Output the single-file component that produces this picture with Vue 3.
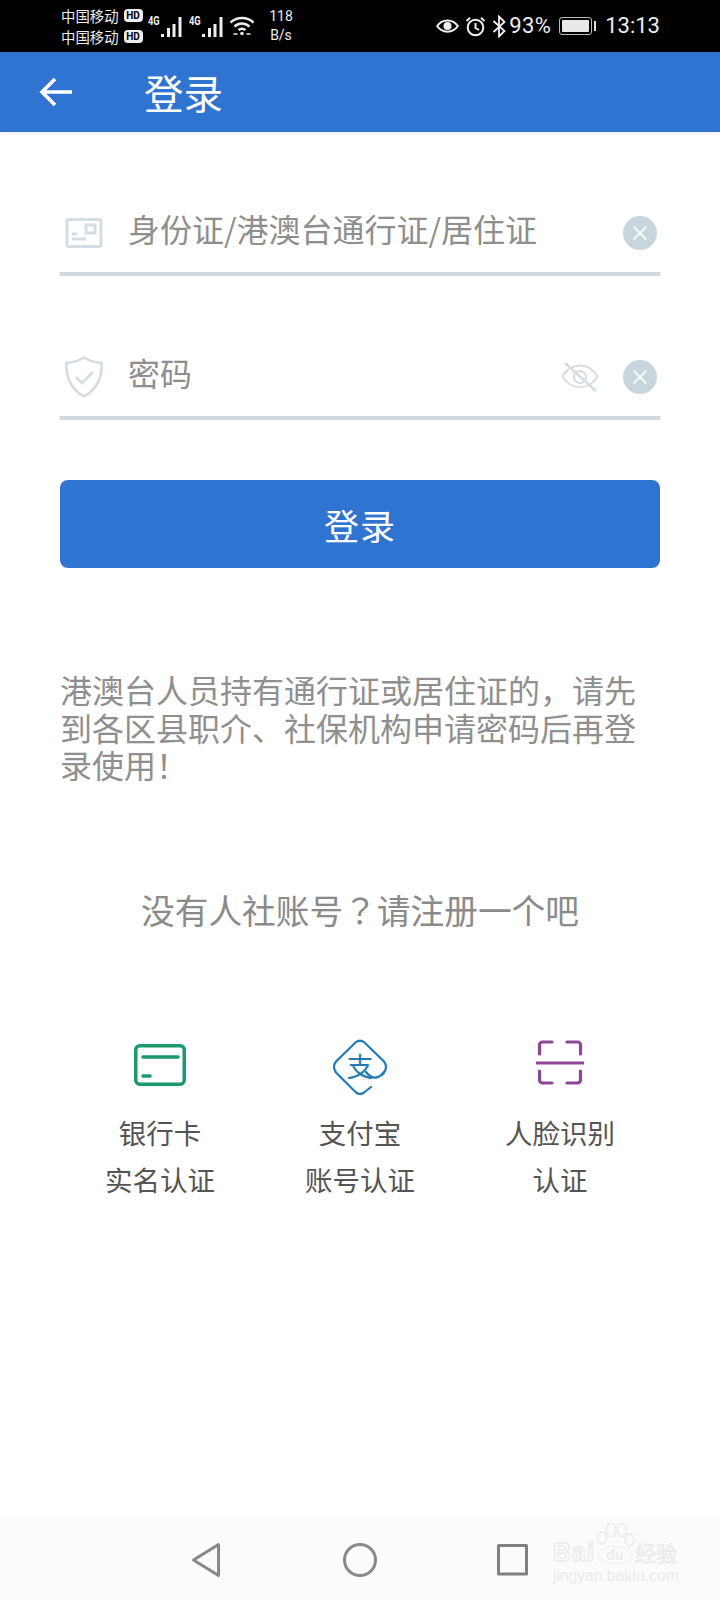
<script setup>
const methods = [
  { id: 'bank', lines: ['银行卡', '实名认证'] },
  { id: 'alipay', lines: ['支付宝', '账号认证'] },
  { id: 'face', lines: ['人脸识别', '认证'] },
]
</script>

<template>
  <div class="page">
    <!-- system status bar -->
    <div class="status-bar">
      <div class="carriers">
        <div class="carrier" v-for="n in 2" :key="n">
          <span>中国移动</span>
          <i class="hd">HD</i>
        </div>
      </div>
      <div class="signal" v-for="n in 2" :key="'s' + n">
        <small>4G</small>
        <svg width="23" height="22" viewBox="0 0 23 22">
          <path d="M2.500 20v-3M8.500 20v-9M14 20V7M20 20V0" stroke="#eee" stroke-width="3" fill="none" />
        </svg>
      </div>
      <svg class="wifi" width="26" height="22" viewBox="0 0 26 22" fill="none" stroke="#eee" stroke-width="2.400">
        <path d="M1.500 7.500C8 1.500 18 1.500 24.500 7.500" />
        <path d="M5.500 11.500C10 7.500 16 7.500 20.500 11.500" />
        <path d="M9.500 15C11.500 13.500 14.500 13.500 16.500 15" />
        <circle cx="13" cy="18.500" r="1.800" fill="#eee" stroke="none" />
        <path d="M4.500 19h4M17.500 19h4" stroke-width="1.600" />
      </svg>
      <div class="speed">
        <span>118</span>
        <span>B/s</span>
      </div>
      <div class="status-right">
        <svg width="23" height="16" viewBox="0 0 23 16" fill="none" stroke="#eee" stroke-width="2">
          <path d="M1.200 8C6 .5 17 .5 21.800 8 17 15.500 6 15.500 1.200 8z" />
          <circle cx="11.500" cy="8" r="4" fill="#eee" stroke="none" />
        </svg>
        <svg class="alarm" width="21" height="21" viewBox="0 0 21 21" fill="none" stroke="#eee" stroke-width="2">
          <circle cx="10.500" cy="11.500" r="7.800" />
          <path d="M10.500 7v5l3.500 2M1.500 5L5 1.800M19.500 5L16 1.800" />
        </svg>
        <svg class="bt" width="15" height="23" viewBox="0 0 15 23" fill="none" stroke="#eee" stroke-width="1.800">
          <path d="M1.500 6l11 10-5.500 5.500V1.500L12.500 7l-11 10" />
        </svg>
        <span class="battery-text">93%</span>
        <div class="battery"><div class="battery-level"></div></div>
        <span class="clock">13:13</span>
      </div>
    </div>

    <header class="app-bar">
      <svg class="back" width="34" height="30" viewBox="0 0 34 30" fill="none" stroke="#fff" stroke-width="3.600">
        <path d="M33 15H3M16 2L3 15l13 13" />
      </svg>
      <h1>登录</h1>
    </header>

    <main class="content">
      <div class="field">
        <svg class="field-icon" width="38" height="30" viewBox="0 0 38 30" fill="none" stroke="#d3dde3" stroke-width="3">
          <rect x="2" y="1.500" width="34" height="27" rx="1.500" />
          <rect x="21" y="7" width="9" height="8" />
          <path d="M7 16h5M7 21h14" />
        </svg>
        <span class="placeholder">身份证/港澳台通行证/居住证</span>
        <span class="clear"></span>
      </div>

      <div class="field">
        <svg class="field-icon" width="38" height="42" viewBox="0 0 38 42" fill="none" stroke="#d3dde3" stroke-width="2.600">
          <path d="M19 1.500C13 5 8 6.500 1.500 7c-1 13 4 26 17.500 33.500C32.500 33 37.500 20 36.500 7 30 6.500 25 5 19 1.500z" />
          <path d="M11 21l6 6 11-11" />
        </svg>
        <span class="placeholder">密码</span>
        <svg class="toggle" width="38" height="30" viewBox="0 0 38 30" fill="none" stroke="#d5dde2" stroke-width="2">
          <path d="M1.500 17C10 1 28 1 36.500 17 28 33 10 33 1.500 17z" transform="translate(0 -1) scale(1 .9)" />
          <circle cx="19" cy="15" r="6" />
          <path d="M4 1l31 28" stroke-width="2.400" />
        </svg>
        <span class="clear"></span>
      </div>

      <button class="login-btn" type="button">登录</button>

      <p class="notice">港澳台人员持有通行证或居住证的，请先到各区县职介、社保机构申请密码后再登录使用！</p>

      <p class="register">没有人社账号<span class="mark-q">？</span>请注册一个吧</p>

      <div class="methods">
        <div class="method" v-for="item in methods" :key="item.id">
          <div class="method-icon">
            <svg v-if="item.id === 'bank'" class="bank-icon" width="52" height="42" viewBox="0 0 52 42" fill="none" stroke="#1b9a6c" stroke-width="3.500" stroke-linecap="round">
              <rect x="1.750" y="1.750" width="48.500" height="38.500" rx="4" />
              <path d="M9 13h35M9 32h7" />
            </svg>
            <svg v-else-if="item.id === 'alipay'" width="56" height="56" viewBox="0 0 56 56" fill="none" stroke="#1f7db4" stroke-width="2.200" stroke-linecap="round">
              <path d="M39 48L32 53.500Q28 56.500 24 53.500L4 33.500Q0 28 4 22.500L23.500 3.500Q28 0 32.500 3.500L52 22.500Q56 28 52 33.500L50 36" />
              <text x="28" y="37.500" text-anchor="middle" class="pay-mark">支</text>
              <path d="M34 33C39 40 46 41 52 33" />
            </svg>
            <svg v-else class="face-icon" width="48" height="46" viewBox="0 0 48 46" fill="none" stroke="#8c4694" stroke-width="3.200" stroke-linecap="round">
              <path d="M3.500 14V5a3 3 0 0 1 3-3H16M31 2h10.500a3 3 0 0 1 3 3v9M3.500 31v9a3 3 0 0 0 3 3H16M31 43h10.500a3 3 0 0 0 3-3v-9M1 23h46" />
            </svg>
          </div>
          <div class="method-line" v-for="line in item.lines" :key="line">{{ line }}</div>
        </div>
      </div>
    </main>

    <!-- system navigation keys -->
    <nav class="nav-bar">
      <svg width="30" height="36" viewBox="0 0 30 36" fill="none" stroke="#888" stroke-width="3" stroke-linejoin="round">
        <path d="M27.500 2.500L2.500 18l25 15.500z" />
      </svg>
      <svg width="34" height="34" viewBox="0 0 34 34" fill="none" stroke="#888" stroke-width="3">
        <circle cx="17" cy="17" r="15.500" />
      </svg>
      <svg width="32" height="32" viewBox="0 0 32 32" fill="none" stroke="#808080" stroke-width="3" stroke-linejoin="round">
        <rect x="1.500" y="1.500" width="28" height="28.500" />
      </svg>
      <div class="mark">
        <svg class="mark-paw" width="38" height="26" viewBox="0 0 38 26" fill="none" stroke="#ebebeb" stroke-width="1.400">
          <ellipse cx="5" cy="15" rx="4.500" ry="6" />
          <ellipse cx="14" cy="7" rx="5" ry="6.500" />
          <ellipse cx="25" cy="7" rx="4.500" ry="6.500" />
          <ellipse cx="32.500" cy="17" rx="4.500" ry="6" />
        </svg>
        <div class="mark-top">
          <span class="mark-bai">Bai</span>
          <span class="mark-du">du</span>
          <span class="mark-cn">经验</span>
        </div>
        <div class="mark-url">jingyan.baidu.com</div>
      </div>
    </nav>
  </div>
</template>

<style scoped>
.page {
  width: 720px;
  height: 1600px;
  display: flex;
  flex-direction: column;
  background: #fff;
  font-family: "Noto Sans CJK SC", "Noto Sans", sans-serif;
  overflow: hidden;
}

.status-bar {
  height: 52px;
  flex: none;
  display: flex;
  align-items: center;
  padding-left: 61px;
  background: #000;
  color: #eee;
}

.carriers {
  width: 87px;
}

.carrier {
  display: flex;
  align-items: center;
  height: 21px;
  font-size: 14.400px;
  line-height: 21px;
  gap: 5px;
  white-space: nowrap;
}

.hd {
  flex: none;
  width: 19px;
  height: 13px;
  border-radius: 4px;
  background: #eee;
  color: #000;
  font: normal 700 10px/13px "Roboto", sans-serif;
  text-align: center;
}

.signal {
  width: 41px;
  display: flex;
  align-items: flex-end;
  margin-top: 2px;
}

.signal small {
  font: 700 13px/12px "Roboto", sans-serif;
  width: 12px;
  margin-bottom: 12px;
  transform: scaleX(0.72);
  transform-origin: left;
}

.wifi {
  margin-left: -1px;
}

.speed {
  width: 34px;
  margin-left: 9px;
  display: flex;
  flex-direction: column;
  align-items: center;
  font: 14px/19px "Roboto", sans-serif;
}

.status-right {
  margin-left: auto;
  margin-right: 60px;
  display: flex;
  align-items: center;
  height: 52px;
}

.alarm {
  margin-left: 6px;
}

.bt {
  margin-left: 6px;
}

.battery-text {
  margin-left: 2px;
  font: 22px/26px "Roboto", sans-serif;
  letter-spacing: 0.400px;
}

.battery {
  position: relative;
  box-sizing: border-box;
  width: 33px;
  height: 18px;
  margin-left: 8px;
  border: 1px solid #bbb;
  border-radius: 3px;
  padding: 2px;
}

.battery::after {
  content: "";
  position: absolute;
  top: 3px;
  right: -5px;
  width: 2px;
  height: 10px;
  background: #ddd;
}

.battery-level {
  height: 100%;
  background: #e8e8e8;
  border-radius: 1px;
}

.clock {
  margin-left: 13px;
  font: 22px/26px "Roboto", sans-serif;
}

.app-bar {
  height: 80px;
  flex: none;
  display: flex;
  align-items: center;
  padding-left: 39px;
  background: #3074d2;
  box-shadow: 0 2px 3px rgba(48, 80, 160, 0.08);
}

.app-bar h1 {
  margin: 0 0 0 71px;
  font-size: 39.500px;
  font-weight: 400;
  color: #fff;
  line-height: 80px;
}

.content {
  flex: 1;
  padding: 0 60px;
}

.field {
  height: 82px;
  margin-top: 62px;
  display: flex;
  align-items: center;
  border-bottom: 4px solid #d1dae0;
  box-sizing: border-box;
}

.field-icon {
  width: 38px;
  margin-left: 5px;
  flex: none;
}

.placeholder {
  flex: 1;
  margin-left: 25px;
  margin-bottom: 10px;
  font-size: 32px;
  line-height: 44px;
  color: #8e8e8e;
}

.toggle {
  margin-right: 24px;
}

.clear {
  position: relative;
  width: 34px;
  height: 34px;
  margin-right: 3px;
  border-radius: 50%;
  background: #c9d5dc;
}

.clear::before,
.clear::after {
  content: "";
  position: absolute;
  left: 8px;
  top: 16px;
  width: 18px;
  height: 2px;
  background: #fff;
  transform: rotate(45deg);
}

.clear::after {
  transform: rotate(-45deg);
}

.login-btn {
  display: block;
  width: 100%;
  height: 88px;
  margin-top: 60px;
  padding: 0;
  border: none;
  border-radius: 8px;
  background: #3074d2;
  color: #fff;
  font-family: inherit;
  font-size: 35px;
  letter-spacing: 1px;
}

.notice {
  margin: 103px 0 0;
  font-size: 32px;
  line-height: 37.700px;
  color: #8f8f8f;
}

.register {
  margin: 105.500px 0 0;
  font-size: 33.700px;
  line-height: 40px;
  text-align: center;
  color: #8a8a8a;
}

.mark-q {
  font-family: "Noto Sans CJK TC", sans-serif;
}

.methods {
  display: grid;
  grid-template-columns: repeat(3, 1fr);
  margin-top: 109px;
}

.method {
  text-align: center;
  font-size: 27.500px;
  line-height: 47px;
  color: #555;
}

.method-icon {
  height: 56px;
  margin-bottom: 14px;
  display: flex;
  align-items: flex-start;
  justify-content: center;
}

.bank-icon {
  margin-top: 5px;
}

.face-icon {
  margin-top: 1px;
}

.pay-mark {
  font-family: "Noto Sans CJK SC", sans-serif;
  font-size: 27px;
  fill: #1f7db4;
  stroke: none;
}

.nav-bar {
  position: relative;
  height: 81px;
  flex: none;
  display: grid;
  grid-template-columns: 152px 154px 1fr;
  align-items: center;
  justify-items: start;
  padding-left: 191px;
  box-sizing: border-box;
  background: #fbfbfb;
}

.mark {
  position: absolute;
  left: 553px;
  top: 23px;
  color: #ebebeb;
}

.mark-paw {
  position: absolute;
  left: 44px;
  top: -19px;
}

.mark-top {
  display: flex;
  align-items: center;
  height: 20px;
  font-family: "Liberation Sans", sans-serif;
  white-space: nowrap;
}

.mark-bai {
  font-size: 25px;
  font-weight: 700;
  letter-spacing: 1px;
  color: transparent;
  -webkit-text-stroke: 1px #e6e6e6;
}

.mark-du {
  box-sizing: border-box;
  width: 36px;
  height: 18px;
  margin-left: 2px;
  margin-top: 6px;
  border: 1px solid #ebebeb;
  border-radius: 50%;
  font-size: 14px;
  font-weight: 700;
  line-height: 16px;
  text-align: center;
}

.mark-cn {
  margin-left: 2px;
  font-family: "Noto Sans CJK SC", sans-serif;
  font-size: 21px;
  color: transparent;
  -webkit-text-stroke: 0.700px #e4e4e4;
}

.mark-url {
  margin-top: 7px;
  font: 15.600px/14px "Liberation Sans", sans-serif;
  white-space: nowrap;
}
</style>
